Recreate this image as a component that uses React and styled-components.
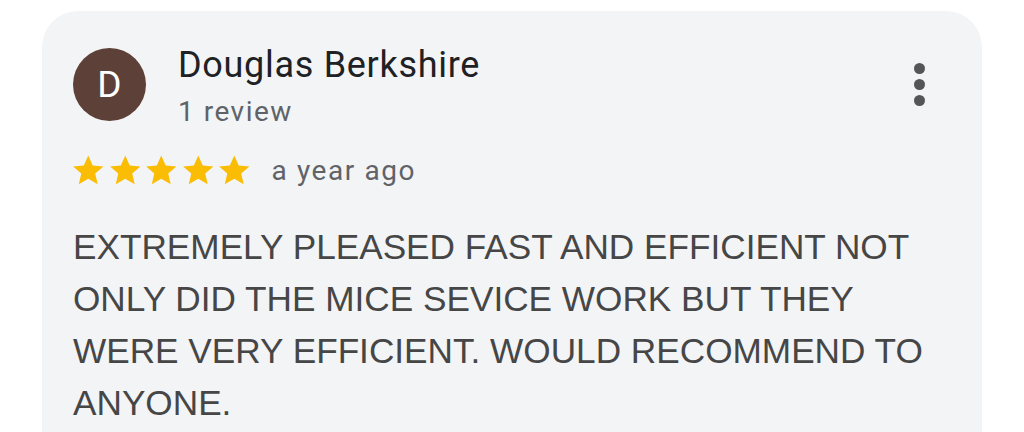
import React from 'react';
import styled, { createGlobalStyle } from 'styled-components';

const GlobalStyle = createGlobalStyle`
  html, body {
    margin: 0;
    padding: 0;
    background: #ffffff;
    overflow: hidden;
  }
`;

const Page = styled.div`
  width: 1024px;
  height: 432px;
  padding: 11px 42px 0 42px;
  box-sizing: border-box;
  overflow: hidden;
`;

const Card = styled.div`
  background: #f3f4f6;
  border-radius: 36px 36px 0 0;
  padding: 37px 31px 40px 31px;
  height: 520px;
  box-sizing: border-box;
`;

const Header = styled.div`
  display: flex;
  align-items: flex-start;
`;

const Avatar = styled.div`
  width: 73px;
  height: 73px;
  border-radius: 50%;
  background: #5d4037;
  color: #ffffff;
  display: flex;
  align-items: center;
  justify-content: center;
  font-family: Roboto, 'Liberation Sans', sans-serif;
  font-size: 37px;
  flex-shrink: 0;
`;

const Who = styled.div`
  margin-left: 32px;
  margin-top: -6px;
  flex: 1;
  font-family: Roboto, 'Liberation Sans', sans-serif;
`;

const Name = styled.div`
  font-size: 36px;
  letter-spacing: 0.7px;
  color: #202124;
  line-height: 46px;
`;

const Sub = styled.div`
  font-size: 28px;
  letter-spacing: 1.5px;
  color: #5f6368;
  line-height: 34px;
  margin-top: 7px;
`;

const MoreButton = styled.div`
  display: flex;
  flex-direction: column;
  gap: 5px;
  margin-top: 15px;
  margin-right: 26px;
`;

const Dot = styled.span`
  width: 11px;
  height: 11px;
  border-radius: 50%;
  background: #555555;
`;

const RatingRow = styled.div`
  display: flex;
  align-items: center;
  margin-top: 23px;
`;

const Stars = styled.div`
  display: flex;
  margin-left: -3px;
`;

const When = styled.span`
  font-family: Roboto, 'Liberation Sans', sans-serif;
  font-size: 28px;
  letter-spacing: 1.6px;
  color: #5f6368;
  margin-left: 19px;
`;

const Body = styled.p`
  margin: 33px 0 0 0;
  font-family: 'Liberation Sans', Arial, sans-serif;
  font-size: 35.2px;
  line-height: 52px;
  color: #464646;
  max-width: 880px;
`;

const Star = () => (
  <svg width="36.5" height="36" viewBox="0 0 24 24">
    <path
      fill="#fbbc04"
      d="M12 2.4l2.95 6.6 7.15.65-5.45 4.75 1.65 7.1L12 17.8l-6.3 3.7 1.65-7.1L1.9 9.65 9.05 9z"
    />
  </svg>
);

export default function App() {
  return (
    <>
      <GlobalStyle />
      <Page>
        <Card>
          <Header>
            <Avatar>D</Avatar>
            <Who>
              <Name>Douglas Berkshire</Name>
              <Sub>1 review</Sub>
            </Who>
            <MoreButton>
              <Dot />
              <Dot />
              <Dot />
            </MoreButton>
          </Header>
          <RatingRow>
            <Stars>
              {[0, 1, 2, 3, 4].map((i) => (
                <Star key={i} />
              ))}
            </Stars>
            <When>a year ago</When>
          </RatingRow>
          <Body>
            EXTREMELY PLEASED FAST AND EFFICIENT NOT ONLY DID THE MICE SEVICE WORK BUT THEY
            WERE VERY EFFICIENT. WOULD RECOMMEND TO ANYONE.
          </Body>
        </Card>
      </Page>
    </>
  );
}
